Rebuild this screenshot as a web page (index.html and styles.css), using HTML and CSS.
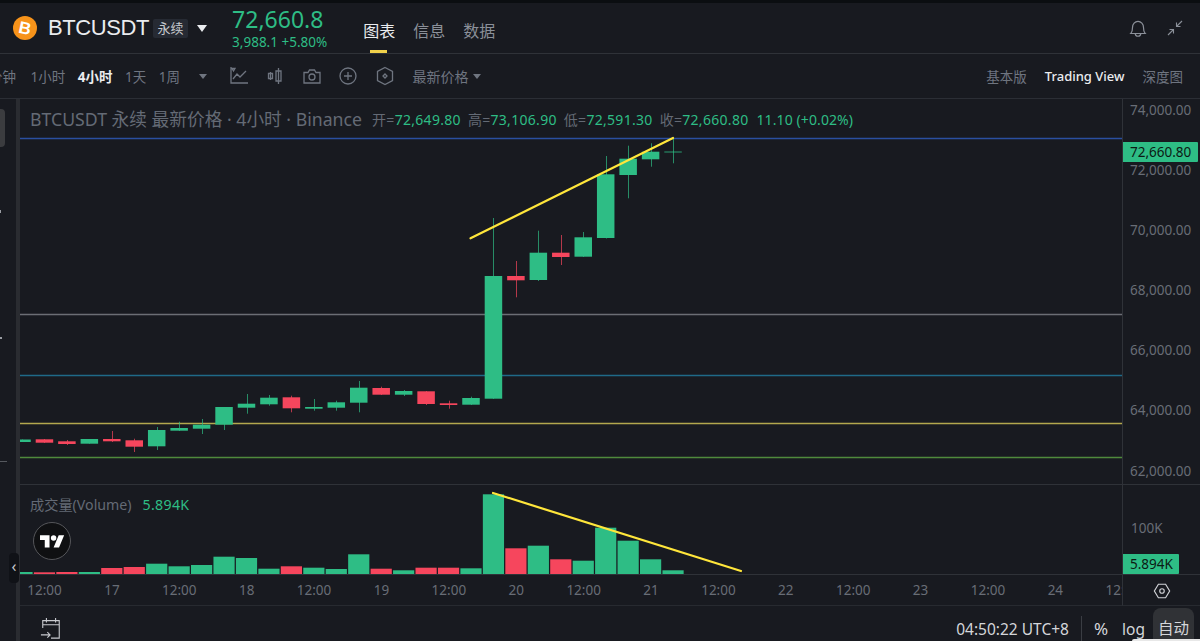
FILE: index.html
```html
<!DOCTYPE html>
<html lang="zh-CN">
<head>
  <meta charset="UTF-8" />
  <title>BTCUSDT 永续</title>
  <link rel="stylesheet" href="styles.css">
</head>
<body>
  <div class="top-strip"></div>

  <header class="header">
    <svg class="coin" viewBox="0 0 24 24">
      <circle cx="12" cy="12" r="12" fill="#f7931a" />
      <text x="12" y="18" text-anchor="middle" transform="rotate(12 12 12)" class="coin-b">B</text>
    </svg>
    <span class="symbol">BTCUSDT</span>
    <span class="tag">永续</span>
    <span class="caret caret-big"></span>
    <div class="quote">
      <div class="quote-price">72,660.8</div>
      <div class="quote-change">3,988.1 +5.80%</div>
    </div>
    <nav class="tabs">
      <a class="tab active">图表</a>
      <a class="tab">信息</a>
      <a class="tab">数据</a>
    </nav>
    <div class="header-icons">
      <svg viewBox="0 0 20 20" class="icon">
        <path d="M3.500 15c1.300-1.300 1.500-3 1.500-5.500a5 5.500 0 0 1 10 0c0 2.500.2 4.200 1.500 5.500zM7.500 15a2.500 2.500 0 0 0 5 0" />
      </svg>
      <svg viewBox="0 0 20 20" class="icon icon-shrink">
        <path d="M11.500 8.500 17 3M11.500 4.500v4h4M8.500 11.500 3 17M4.500 11.500h4v4" />
      </svg>
    </div>
  </header>

  <div class="toolbar">
    <span class="tf tf-cut">分钟</span>
    <span class="tf">1小时</span>
    <span class="tf active">4小时</span>
    <span class="tf">1天</span>
    <span class="tf">1周</span>
    <span class="caret caret-dim"></span>
    <svg viewBox="0 0 20 20" class="tool first">
      <path d="M2 1v16h17M4 13l4-5 3 3 6-6M3 2.500l3 0-1.500 2.500z" />
    </svg>
    <svg viewBox="0 0 20 20" class="tool">
      <path d="M5.500 6v8M3.500 7.500h4v5h-4zM13.500 2v16M11 5h5v10h-5z" />
    </svg>
    <svg viewBox="0 0 20 20" class="tool">
      <path d="M2 6.500h4l1.500-2.500h5l1.500 2.500h4v10.500h-16z" />
      <circle cx="10" cy="11" r="3" />
    </svg>
    <svg viewBox="0 0 20 20" class="tool">
      <circle cx="10" cy="10" r="8" />
      <path d="M10 6v8M6 10h8" />
    </svg>
    <svg viewBox="0 0 20 20" class="tool">
      <path d="M10 1.500 17.500 5.500v9l-7.500 4-7.500-4v-9z" />
      <path d="M10 8l2 2-2 2-2-2z" />
    </svg>
    <span class="price-type">最新价格</span>
    <span class="caret caret-dim small"></span>
    <div class="views">
      <span class="view">基本版</span>
      <span class="view active">Trading View</span>
      <span class="view">深度图</span>
    </div>
  </div>

  <div class="workspace">
    <aside class="rail">
      <div class="rail-side">
        <div class="rail-active"></div>
        <div class="rail-mark mark-a"></div>
        <div class="rail-mark mark-b"></div>
        <div class="rail-mark mark-c"></div>
      </div>
      <div class="rail-strip"></div>
      <div class="rail-handle">‹</div>
    </aside>

    <div class="board">
      <div class="chart-grid">
        <div class="pane pane-price">
          <svg id="price-chart" class="plot" viewBox="20 99 1102 385"></svg>
          <div class="legend">
            <span class="legend-title">BTCUSDT 永续 最新价格 · 4小时 · Binance</span>
            <span class="legend-vals">
              <span>开=<b>72,649.80</b></span>
              <span>高=<b>73,106.90</b></span>
              <span>低=<b>72,591.30</b></span>
              <span>收=<b>72,660.80</b></span>
            </span>
            <b class="legend-diff">11.10 (+0.02%)</b>
          </div>
        </div>
        <div class="axis axis-price">
          <div class="axis-labels">
            <span>74,000.00</span>
            <span>72,000.00</span>
            <span>70,000.00</span>
            <span>68,000.00</span>
            <span>66,000.00</span>
            <span>64,000.00</span>
            <span>62,000.00</span>
          </div>
          <div class="axis-tag tag-price">72,660.80</div>
        </div>

        <div class="pane pane-volume">
          <svg id="volume-chart" class="plot" viewBox="20 485 1102 89"></svg>
          <div class="volume-legend">
            <span>成交量(Volume)</span>
            <b>5.894K</b>
          </div>
          <svg class="tv-logo" viewBox="0 0 38 38">
            <circle cx="19" cy="19" r="18.500" />
            <g transform="translate(7 10.500) scale(.68)">
              <path d="M14 22H7V11H0V4h14v18zM28 22h-8l7.500-18h8L28 22z" />
              <circle cx="20" cy="8" r="4" />
            </g>
          </svg>
        </div>
        <div class="axis axis-volume">
          <span class="axis-100k">100K</span>
          <div class="axis-tag tag-volume">5.894K</div>
        </div>

        <div class="time-axis">
          <span>12:00</span><span>17</span><span>12:00</span><span>18</span><span>12:00</span><span>19</span>
          <span>12:00</span><span>20</span><span>12:00</span><span>21</span><span>12:00</span><span>22</span>
          <span>12:00</span><span>23</span><span>12:00</span><span>24</span><span>12:00</span>
        </div>
        <div class="axis axis-settings">
          <svg viewBox="0 0 20 20" class="hex">
            <path d="M6 2.500h8l4.500 7.500-4.500 7.500h-8l-4.500-7.500z" />
            <circle cx="10" cy="10" r="2.500" />
          </svg>
        </div>
      </div>

      <footer class="status">
        <svg viewBox="0 0 24 24" class="range-icon">
          <path d="M3 12V4h18v19h-9M3 8.500h18M7 1v5M17 1v5M1 19.500h10M8 16.500l3 3-3 3" />
        </svg>
        <span class="clock">04:50:22 UTC+8</span>
        <span class="status-sep"></span>
        <span class="status-btn pct">%</span>
        <span class="status-btn log">log</span>
        <span class="status-btn auto">自动</span>
      </footer>
    </div>
  </div>
  <div class="page-corner"></div>

  <script src="chart.js"></script>
</body>
</html>
```

FILE: styles.css
```css
* {
  box-sizing: border-box;
}
html, body {
  height: 100%;
}
body {
  margin: 0;
  height: 641px;
  overflow: hidden;
  position: relative;
  display: flex;
  flex-direction: column;
  background: #181a20;
  color: #848e9c;
  font-family: "Noto Sans", "Noto Sans CJK SC", sans-serif;
}
b {
  font-weight: 400;
}
.top-strip {
  height: 3px;
  background: #0b0e11;
}

/* header */
.header {
  height: 51px;
  display: flex;
  align-items: center;
  padding-left: 13px;
  border-bottom: 1px solid #2f3238;
}
.coin {
  width: 24px;
  height: 24px;
  margin-top: -1px;
}
.coin-b {
  fill: #fff;
  font: 700 17px "Liberation Sans", sans-serif;
}
.symbol {
  margin-left: 11px;
  font: 400 22px "Liberation Sans", sans-serif;
  color: #eaecef;
  letter-spacing: -0.4px;
}
.tag {
  margin-left: 4px;
  width: 35px;
  height: 19px;
  line-height: 19px;
  text-align: center;
  font-size: 13px;
  color: #c6c9ce;
  background: #262a33;
  border-radius: 2px;
}
.caret {
  width: 0;
  height: 0;
  border-left: 5px solid transparent;
  border-right: 5px solid transparent;
  border-top: 7px solid #848e9c;
}
.caret-big {
  margin-left: 9px;
  border-left-width: 5.5px;
  border-right-width: 5.5px;
  border-top-color: #eaecef;
}
.quote {
  margin-left: 25px;
  margin-top: -1px;
  color: #2ebd85;
}
.quote-price {
  font-size: 23px;
  line-height: 28px;
}
.quote-change {
  font-size: 13.500px;
  line-height: 17px;
  margin-top: 1px;
}
.tabs {
  display: flex;
  gap: 18px;
  margin-left: 36px;
  align-self: stretch;
}
.tab {
  position: relative;
  font-size: 16px;
  line-height: 56px;
  color: #8b9099;
}
.tab.active {
  color: #eaecef;
}
.tab.active::after {
  content: "";
  position: absolute;
  left: 7px;
  right: 8px;
  bottom: 0;
  height: 3px;
  background: #f0d04a;
}
.header-icons {
  margin-left: auto;
  margin-right: 15px;
  display: flex;
  align-items: center;
  gap: 16px;
}
.icon {
  width: 22px;
  height: 22px;
  fill: none;
  stroke: #8b9099;
  stroke-width: 1.100;
}
.icon-shrink {
  width: 20px;
  height: 20px;
}

/* toolbar */
.toolbar {
  height: 45px;
  display: flex;
  align-items: center;
  gap: 12.500px;
  padding-right: 17px;
  border-bottom: 1px solid #2b2e35;
  font-size: 13.500px;
  overflow: hidden;
}
.tf {
  color: #6f7580;
  white-space: nowrap;
}
.tf-cut {
  margin-left: -11px;
  margin-right: 2px;
}
.tf.active {
  color: #eaecef;
  font-weight: 700;
}
.caret-dim {
  margin-left: 7px;
  border-top-color: #6f7580;
  border-left-width: 4.500px;
  border-right-width: 4.500px;
  border-top-width: 5px;
}
.tool {
  width: 20px;
  height: 20px;
  margin-right: 4px;
  fill: none;
  stroke: #6f7580;
  stroke-width: 1.300;
}
.tool.first {
  margin-left: 9px;
}
.price-type {
  margin-left: 1px;
  font-size: 14px;
  color: #6f7580;
}
.caret-dim.small {
  margin-left: -8px;
}
.views {
  margin-left: auto;
  display: flex;
  align-items: center;
  gap: 18px;
}
.view {
  color: #6f7580;
}
.view.active {
  color: #eaecef;
  font-size: 13px;
  font-weight: 500;
}

/* left rail */
.workspace {
  flex: 1;
  display: flex;
  min-height: 0;
}
.rail {
  position: relative;
  width: 20px;
  display: flex;
  flex: none;
}
.rail-side {
  position: relative;
  width: 16px;
}
.rail-strip {
  width: 4px;
  background: #2a2c31;
}
.rail-active {
  position: absolute;
  left: -6px;
  top: 10px;
  width: 11px;
  height: 38px;
  border-radius: 4px;
  background: #3b3c3f;
}
.rail-mark {
  position: absolute;
  left: 0;
  background: #9a9da3;
}
.mark-a {
  top: 111px;
  width: 1px;
  height: 3px;
}
.mark-b {
  top: 238px;
  width: 2px;
  height: 2px;
}
.mark-c {
  top: 362px;
  width: 7px;
  height: 1px;
  background: #55585e;
}
.rail-handle {
  position: absolute;
  left: 9px;
  top: 454px;
  width: 10px;
  height: 30px;
  line-height: 27px;
  text-align: center;
  font-size: 16px;
  color: #c7c9cc;
  background: #101217;
  border-radius: 4px;
}

/* chart */
.board {
  flex: 1;
  display: flex;
  flex-direction: column;
}
.chart-grid {
  display: grid;
  grid-template-columns: 1102px 78px;
  grid-template-rows: 386px 90px 31px;
}
.pane {
  position: relative;
  border-bottom: 1px solid #2f3238;
  overflow: hidden;
}
.plot {
  display: block;
  width: 1102px;
}
.pane-price .plot {
  height: 385px;
}
.pane-volume .plot {
  height: 89px;
}
.legend {
  position: absolute;
  left: 10px;
  top: 7px;
  display: flex;
  align-items: center;
  white-space: nowrap;
}
.legend-title {
  font-size: 17.700px;
  line-height: 26px;
  color: #646a75;
}
.legend-vals {
  display: flex;
  gap: 7px;
  margin-left: 10px;
  font-size: 14px;
  letter-spacing: 0.3px;
  color: #646a75;
}
.legend-vals b,
.legend-diff {
  color: #2ebd85;
}
.legend-diff {
  margin-left: 8px;
  font-size: 14px;
  letter-spacing: 0.1px;
}
.axis {
  position: relative;
  border-left: 1px solid #2f3238;
  border-bottom: 1px solid #2f3238;
  font-size: 13.500px;
  color: #686d76;
  overflow: hidden;
}
.axis-labels {
  margin-top: -19px;
  padding-left: 7px;
  display: flex;
  flex-direction: column;
}
.axis-labels span {
  height: 60.100px;
  line-height: 60.100px;
}
.axis-tag {
  position: absolute;
  left: 0;
  height: 20px;
  line-height: 20px;
  padding-left: 7px;
  background: #2ebd85;
  color: #0c1a14;
  border-radius: 0 1px 1px 0;
}
.tag-price {
  top: 43px;
  width: 75px;
}
.tag-volume {
  bottom: 0;
  width: 56px;
}
.axis-100k {
  display: block;
  padding: 33px 0 0 8px;
  line-height: 20px;
}
.volume-legend {
  position: absolute;
  left: 10px;
  top: 10px;
  display: flex;
  gap: 11px;
  font-size: 14.200px;
  line-height: 20px;
  color: #646a75;
}
.volume-legend b {
  color: #2ebd85;
  letter-spacing: 0.3px;
}
.tv-logo {
  position: absolute;
  left: 13px;
  top: 37px;
  width: 38px;
  height: 38px;
}
.tv-logo > circle {
  fill: #0f1012;
  stroke: #55565a;
}
.tv-logo g {
  fill: #fff;
}
.time-axis {
  display: flex;
  overflow: hidden;
  border-bottom: 1px solid #272a30;
  font-size: 13.500px;
  line-height: 31px;
  color: #686d76;
}
.time-axis span {
  flex: 0 0 67.400px;
  text-align: center;
  white-space: nowrap;
}
.time-axis span:first-child {
  margin-left: -9.200px;
}
.axis-settings {
  border-bottom: 1px solid #272a30;
}
.hex {
  display: block;
  width: 18px;
  height: 18px;
  margin: 7px 0 0 30px;
  fill: none;
  stroke: #d0d2d6;
  stroke-width: 1.300;
}

/* status bar */
.status {
  position: relative;
  height: 35px;
  display: flex;
  align-items: flex-start;
  padding: 0 6px 0 0;
  font-size: 15.500px;
  color: #d4d6da;
}
.range-icon {
  width: 22px;
  height: 22px;
  margin: 11px 0 0 20px;
  fill: none;
  stroke: #c8cacf;
  stroke-width: 1.200;
}
.clock {
  margin-left: auto;
  margin-top: 11px;
  line-height: 24px;
}
.status-sep {
  width: 1px;
  height: 25px;
  margin: 10px 12px 0 12px;
  background: #3a3d43;
}
.status-btn {
  margin-top: 11px;
  line-height: 24px;
  margin-right: 14px;
}
.status-btn.pct {
  font-size: 17px;
}
.status-btn.log {
  margin-right: 12px;
}
.status-btn.auto {
  margin: 2px 0 0 -4px;
  width: 41px;
  height: 33px;
  padding-top: 8px;
  text-align: center;
  background: #303236;
  border-radius: 8px 8px 0 0;
}
.page-corner {
  position: absolute;
  right: 0;
  bottom: 0;
  width: 68px;
  height: 2px;
  background: #e8e8e8;
  border-radius: 2px 0 0 0;
}
```

FILE: chart.js
```js
// everything is in page pixels, the svg viewBox matches the page
const GREEN = '#2ebd85';
const RED = '#f6465d';
const STEP = 22.45;
const FIRST_X = 22;

// [top, bottom, high, low, up]
const candles = [
  [439.5, 442, 439.5, 442, 1],
  [439.3, 442.7, 439, 443, 0],
  [441.3, 444, 440, 445, 0],
  [439, 443.7, 439, 443.7, 1],
  [439, 441.3, 431, 442, 0],
  [440.3, 446.7, 438.7, 452, 0],
  [430, 446.3, 427, 450, 1],
  [428, 430.7, 421.7, 431, 1],
  [424.7, 428.7, 419, 434, 1],
  [407, 424.7, 407, 430, 1],
  [403.7, 407.7, 394, 413.7, 1],
  [397.7, 404.3, 395, 405.7, 1],
  [397.3, 408.3, 395.7, 412.3, 0],
  [407, 408.7, 399, 410.7, 1],
  [402.3, 407.7, 400.7, 410.7, 1],
  [387.7, 402.7, 381, 412.3, 1],
  [388, 394.7, 386.7, 395, 0],
  [391, 394.7, 390, 396, 1],
  [391.3, 404, 391, 405, 0],
  [403.3, 405, 400.7, 408.7, 0],
  [398, 404.7, 396.7, 405, 1],
  [276, 398.7, 218, 399, 1],
  [276, 280.3, 261, 297.3, 0],
  [252.7, 280, 230.7, 281, 1],
  [252.7, 257, 235, 265, 0],
  [237.3, 256.7, 232, 257, 1],
  [174.3, 238, 156, 238.5, 1],
  [158.7, 175, 145.7, 198.3, 1],
  [151.7, 159.3, 143.3, 166.7, 1],
  [151.6, 152.4, 138.3, 163.3, 1]
];

// [top, up]
const volumes = [
  [572, 1], [572.3, 0], [572, 0], [572, 1], [568, 0], [567, 0], [563.7, 1], [566.3, 1],
  [565, 1], [556.7, 1], [558, 1], [568.7, 1], [566.3, 0], [567.7, 1], [569, 1], [554.3, 1],
  [568.7, 0], [570.3, 1], [567.7, 0], [567.7, 0], [568.3, 1], [494.3, 1], [548.3, 0],
  [545.7, 1], [559.3, 0], [560.7, 1], [527.7, 1], [540.7, 1], [559.3, 1], [570.3, 1]
];

const levels = [
  { y: 138.5, color: '#2a4fa0' },
  { y: 314.5, color: '#6b6e75' },
  { y: 375.5, color: '#1f6a88' },
  { y: 423.5, color: '#b3a84e' },
  { y: 457.5, color: '#4f8a3c' }
];

function make(parent, tag, attrs) {
  const el = document.createElementNS('http://www.w3.org/2000/svg', tag);
  Object.keys(attrs).forEach(k => el.setAttribute(k, attrs[k]));
  parent.appendChild(el);
  return el;
}

function trend(parent, x1, y1, x2, y2) {
  make(parent, 'line', { x1, y1, x2, y2, stroke: '#ffe63b', 'stroke-width': 2.2, 'stroke-linecap': 'round' });
}

const price = document.getElementById('price-chart');
const volume = document.getElementById('volume-chart');

levels.forEach(l => {
  make(price, 'line', { x1: 20, x2: 1122, y1: l.y, y2: l.y, stroke: l.color, 'stroke-width': 1.6 });
});

candles.forEach((c, i) => {
  const x = FIRST_X + STEP * i;
  const color = c[4] ? GREEN : RED;
  const cx = Math.round(x) + 0.5;
  make(price, 'line', { x1: cx, x2: cx, y1: c[2], y2: c[3], stroke: color, 'stroke-opacity': 0.7, 'stroke-width': 1 });
  make(price, 'rect', { x: x - 8.75, y: c[0], width: 17.5, height: c[1] - c[0], fill: color });
});
trend(price, 470.5, 238.3, 673, 138);

volumes.forEach((v, i) => {
  const x = FIRST_X + STEP * i;
  make(volume, 'rect', { x: x - 10.6, y: v[0], width: 21.2, height: 574 - v[0], fill: v[1] ? GREEN : RED });
});
trend(volume, 493, 493, 741, 571);
```
